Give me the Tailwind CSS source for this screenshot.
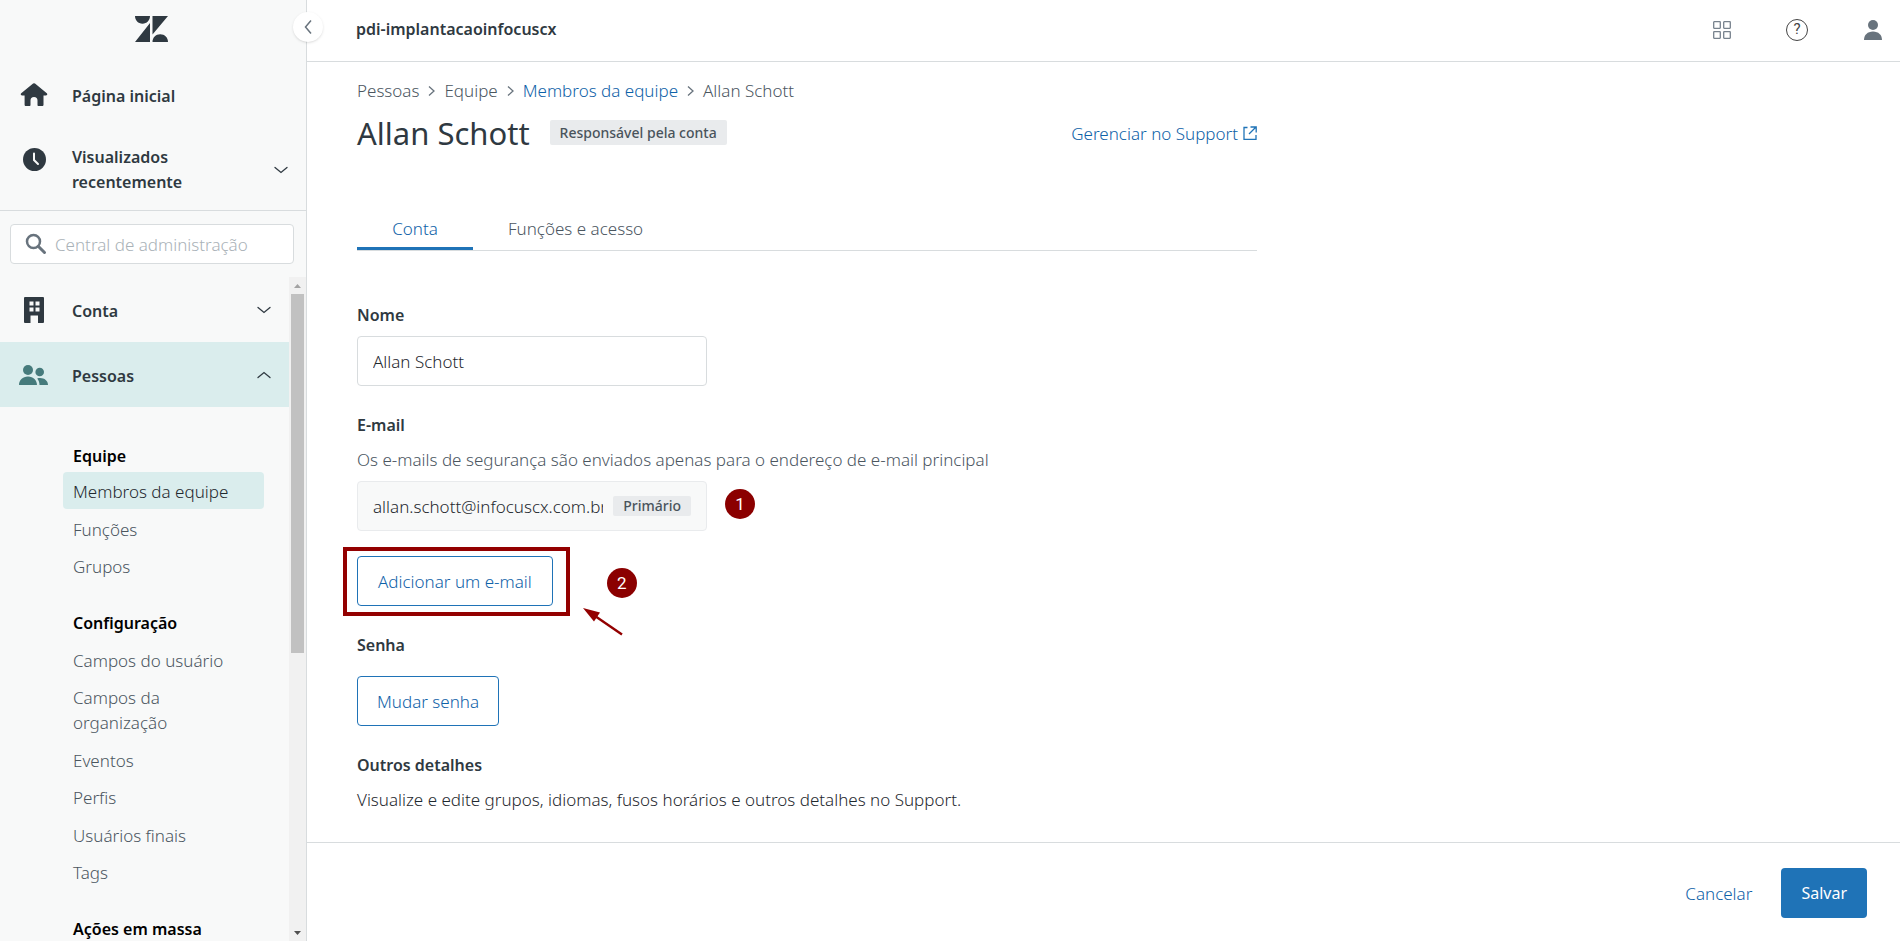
<!DOCTYPE html>
<html lang="pt-BR">
<head>
  <meta charset="UTF-8">
  <meta name="viewport" content="width=device-width, initial-scale=1.0">
  <title>Allan Schott - Central de administração</title>
  <script src="https://cdn.jsdelivr.net/npm/@tailwindcss/browser@4"></script>
</head>
<body class="flex h-screen overflow-hidden bg-white font-['Noto_Sans',sans-serif] text-[17px] leading-[25px] font-light text-[#2f3941]">

  <!-- Sidebar -->
  <aside class="relative flex w-[307px] shrink-0 flex-col border-r border-[#d8dcde] bg-[#f8f9f9]">
    <button aria-label="Recolher menu" class="absolute top-3 -right-[17px] z-10 flex size-[30px] items-center justify-center rounded-full bg-white shadow">
      <svg class="h-4 w-2" viewBox="0 0 8 16" fill="none" stroke="#68737d" stroke-width="1.500"><path d="M7 1.500L1.500 8 7 14.500"/></svg>
    </button>

    <div class="flex h-[62px] shrink-0 justify-center pt-4 pr-1">
      <svg class="h-[26px] w-[33px]" viewBox="0 0 33 26" fill="#2f3941"><path d="M0 0h15c0 4.400-3.200 7.700-7.500 7.700S0 4.400 0 0zM15 7v19H0zM17.500 0H33L17.500 18.500zM17.500 26c0-4.400 3.200-7.700 7.700-7.700S33 21.600 33 26z"/></svg>
    </div>

    <nav class="shrink-0 border-b border-[#d8dcde] pb-[15px]">
      <a href="#" class="flex h-[66px] items-center text-[16px] font-semibold">
        <span class="flex w-[72px] pl-5">
          <svg class="h-6 w-7" viewBox="0 0 28 24" fill="#2f3941"><path d="M13.100.6a1.500 1.500 0 011.900 0l11.800 9.600c.9.800.4 2.200-.8 2.200h-2.500v9.300c0 .8-.5 1.300-1.300 1.300h-3.700c-.6 0-1-.4-1-1v-4.500a3.500 3.500 0 00-7 0V22c0 .6-.4 1-1 1H5.900c-.8 0-1.300-.5-1.300-1.300v-9.300H2c-1.200 0-1.700-1.400-.8-2.200z"/></svg>
        </span>
        <span class="pt-[2px]">Página inicial</span>
      </a>
      <button class="flex w-full items-center pt-[17px] text-left text-[16px] font-semibold">
        <span class="flex w-[72px] shrink-0 self-start pt-[3px] pl-[23px]">
          <svg class="size-[23px]" viewBox="0 0 23 23"><circle cx="11.500" cy="11.500" r="11.500" fill="#2f3941"/><path d="M11 5.500v6.500l4 4" fill="none" stroke="#f8f9f9" stroke-width="2" stroke-linecap="round"/></svg>
        </span>
        <span class="w-[130px]">Visualizados recentemente</span>
        <svg class="mr-[18px] ml-auto h-2 w-[14px]" viewBox="0 0 14 8" fill="none" stroke="#2f3941" stroke-width="1.300" stroke-linecap="round"><path d="M1 1.500l6 5 6-5"/></svg>
      </button>
    </nav>

    <div class="shrink-0 pt-[13px] pr-3 pb-[13px] pl-[10px]">
      <label class="flex h-10 items-center rounded border border-[#d8dcde] bg-white pl-[14px]">
        <svg class="size-[22px] shrink-0" viewBox="0 0 22 22" fill="none" stroke="#68737d"><circle cx="8.500" cy="8.500" r="6.500" stroke-width="2.500"/><path d="M13.500 13.500l6 6" stroke-width="3" stroke-linecap="round"/></svg>
        <input type="search" aria-label="Pesquisar" placeholder="Central de administração" class="ml-2 w-full min-w-0 outline-none placeholder:text-[#aab2b8]">
      </label>
    </div>

    <div class="flex min-h-0 flex-1">
      <nav class="flex-1 overflow-hidden">
        <button class="flex h-[65px] w-full items-center text-left text-[16px] font-semibold">
          <span class="flex w-[72px] pl-6">
            <svg class="h-[26px] w-5" viewBox="0 0 20 26" fill="#2f3941" fill-rule="evenodd"><path d="M1 0h18a1 1 0 011 1v24a1 1 0 01-1 1h-5v-7.500H6.500V26H1a1 1 0 01-1-1V1a1 1 0 011-1zm4.500 4.500v4h4v-4zm6 0v4h4v-4zm-6 6v4h4v-4zm6 0v4h4v-4z"/></svg>
          </span>
          <span class="pt-[3px]">Conta</span>
          <svg class="mr-[18px] ml-auto h-2 w-[14px]" viewBox="0 0 14 8" fill="none" stroke="#2f3941" stroke-width="1.300" stroke-linecap="round"><path d="M1 1.500l6 5 6-5"/></svg>
        </button>
        <button class="flex h-[65px] w-full items-center bg-[#daeded] text-left text-[16px] font-semibold">
          <span class="flex w-[72px] pl-[19px]">
            <svg class="h-5 w-[29px]" viewBox="0 0 29 20" fill="#467b7c"><circle cx="9" cy="5" r="5"/><circle cx="20.700" cy="7" r="4.300"/><path d="M0 20c0-4.800 3.600-8.500 9-8.500s9 3.700 9 8.500zM18.200 13.400c5.700-1.500 10.800 1.500 10.800 6.600h-8.500c0-2.600-.8-4.800-2.300-6.600z"/></svg>
          </span>
          <span class="pt-[3px]">Pessoas</span>
          <svg class="mr-[18px] ml-auto h-2 w-[14px]" viewBox="0 0 14 8" fill="none" stroke="#2f3941" stroke-width="1.300" stroke-linecap="round"><path d="M1 6.500l6-5 6 5"/></svg>
        </button>

        <div class="mt-8 mr-[25px] ml-[63px] space-y-[22px] text-[#4b565f]">
          <section>
            <h2 class="px-[10px] pt-[5px] pb-[3px] text-[16px] font-semibold text-black">Equipe</h2>
            <ul>
              <li><a href="#" class="block rounded bg-[#daeded] px-[10px] pt-[7px] pb-[5px] text-[#1f292f]">Membros da equipe</a></li>
              <li><a href="#" class="block px-[10px] pt-2 pb-[5px]">Funções</a></li>
              <li><a href="#" class="block px-[10px] pt-[7px] pb-[5px]">Grupos</a></li>
            </ul>
          </section>
          <section>
            <h2 class="px-[10px] pt-[5px] pb-[5px] text-[16px] font-semibold text-black">Configuração</h2>
            <ul>
              <li><a href="#" class="block px-[10px] pt-[7px] pb-[5px]">Campos do usuário</a></li>
              <li><a href="#" class="block w-[140px] px-[10px] pt-[7px] pb-[5px]">Campos da organização</a></li>
              <li><a href="#" class="block px-[10px] pt-2 pb-[5px]">Eventos</a></li>
              <li><a href="#" class="block px-[10px] pt-[7px] pb-[5px]">Perfis</a></li>
              <li><a href="#" class="block px-[10px] pt-2 pb-[5px]">Usuários finais</a></li>
              <li><a href="#" class="block px-[10px] pt-[7px] pb-[5px]">Tags</a></li>
            </ul>
          </section>
          <section>
            <h2 class="px-[10px] pt-[5px] pb-[5px] text-[16px] font-semibold text-black">Ações em massa</h2>
          </section>
        </div>
      </nav>

      <!-- Scrollbar -->
      <div class="flex w-[17px] shrink-0 flex-col items-center bg-[#f1f1f1]">
        <svg class="size-[17px] shrink-0" viewBox="0 0 17 17" fill="#a3a3a3"><path d="M5 11h7L8.500 7z"/></svg>
        <div class="min-h-0 w-full flex-1 px-[2px]"><div class="h-[57%] bg-[#c1c1c1]"></div></div>
        <svg class="size-[17px] shrink-0" viewBox="0 0 17 17" fill="#505050"><path d="M5 7h7l-3.500 4z"/></svg>
      </div>
    </div>
  </aside>

  <div class="flex min-w-0 flex-1 flex-col">
    <!-- Top bar -->
    <header class="flex h-[62px] shrink-0 items-center border-b border-[#d8dcde] pr-[18px] pb-[2px] pl-[49px]">
      <span class="text-[16px] font-semibold">pdi-implantacaoinfocuscx</span>
      <div class="ml-auto flex items-center">
        <button aria-label="Produtos">
          <svg class="size-[18px]" viewBox="0 0 18 18" fill="none" stroke="#77828d" stroke-width="1.300"><rect x=".7" y=".7" width="6.600" height="6.600" rx=".5"/><rect x="10.700" y=".7" width="6.600" height="6.600" rx=".5"/><rect x=".7" y="10.700" width="6.600" height="6.600" rx=".5"/><rect x="10.700" y="10.700" width="6.600" height="6.600" rx=".5"/></svg>
        </button>
        <button aria-label="Ajuda" class="ml-[55px] flex size-[22px] items-center justify-center rounded-full border border-[#444] font-['Roboto',sans-serif] text-[15px] font-normal text-[#444]">?</button>
        <button aria-label="Perfil" class="ml-14">
          <svg class="h-5 w-[18px]" viewBox="0 0 18 20" fill="#68737d"><circle cx="9" cy="5" r="5"/><path d="M0 20c0-5 3.500-8.500 9-8.500s9 3.500 9 8.500z"/></svg>
        </button>
      </div>
    </header>

    <main class="min-h-0 flex-1 overflow-hidden pt-4 pr-4 pl-[50px]">
      <div class="max-w-[900px]">
        <nav aria-label="Trilha" class="flex items-center gap-2 text-[#4b565f]">
          <span>Pessoas</span>
          <svg class="h-[10px] w-[9px]" viewBox="0 0 9 10" fill="none" stroke="#68737d" stroke-width="1.300"><path d="M2 .5L7 5 2 9.500"/></svg>
          <span>Equipe</span>
          <svg class="h-[10px] w-[9px]" viewBox="0 0 9 10" fill="none" stroke="#68737d" stroke-width="1.300"><path d="M2 .5L7 5 2 9.500"/></svg>
          <a href="#" class="text-[#0f62a8]">Membros da equipe</a>
          <svg class="h-[10px] w-[9px]" viewBox="0 0 9 10" fill="none" stroke="#68737d" stroke-width="1.300"><path d="M2 .5L7 5 2 9.500"/></svg>
          <span>Allan Schott</span>
        </nav>

        <div class="mt-2 flex h-11 items-center">
          <h1 class="text-[31px] font-normal">Allan Schott</h1>
          <span class="mb-[2px] ml-5 rounded-[2px] bg-[#e9ebed] px-[10px] text-[14px] font-medium text-[#49545c]">Responsável pela conta</span>
          <a href="#" class="ml-auto flex items-center gap-[5px] text-[#0f62a8]">
            Gerenciar no Support
            <svg class="size-[14px]" viewBox="0 0 14 14" fill="none" stroke="#1f73b7" stroke-width="1.300"><path d="M4.500 1.500H1v11.800h12V9M7.500 1h5.700v5.500M13 1L6 8"/></svg>
          </a>
        </div>

        <div role="tablist" class="mt-[61px] flex border-b border-[#d8dcde]">
          <button role="tab" aria-selected="true" class="w-[116px] border-b-[3px] border-[#1f73b7] pb-[6px] text-[#0f62a8]">Conta</button>
          <button role="tab" class="px-[35px] pb-[9px] text-[#4b565f]">Funções e acesso</button>
        </div>

        <form class="text-[#1f292f]">
          <label for="nome" class="mt-[52px] block text-[16px] font-semibold text-[#2f3941]">Nome</label>
          <input id="nome" type="text" value="Allan Schott" class="mt-[8px] block h-[50px] w-[350px] rounded border border-[#d8dcde] px-[15px]">

          <label for="email" class="mt-[27px] block text-[16px] font-semibold text-[#2f3941]">E-mail</label>
          <p class="mt-[9px] text-[#4b565f]">Os e-mails de segurança são enviados apenas para o endereço de e-mail principal</p>
          <div class="mt-[9px] flex items-center gap-[18px]">
            <div class="flex h-[50px] w-[350px] items-center gap-[10px] rounded border border-[#e9ebed] bg-[#f8f9f9] px-[15px]">
              <input id="email" type="email" readonly value="allan.schott@infocuscx.com.br" class="w-[230px] min-w-0 flex-1 outline-none">
              <span class="rounded-[2px] bg-[#e9ebed] px-[10px] text-[14px] leading-5 font-medium text-[#49545c]">Primário</span>
            </div>
            <span class="mb-1 flex size-[30px] items-center justify-center rounded-full bg-[#8b0000] font-['Roboto',sans-serif] text-[17px] font-normal text-white">1</span>
          </div>

          <div class="mt-[25px] flex items-center">
            <div class="relative">
              <button type="button" class="h-[50px] rounded border border-[#1f73b7] px-5 text-[#0f62a8]">Adicionar um e-mail</button>
              <div class="pointer-events-none absolute -top-[9px] -right-[17px] -bottom-[10px] -left-[14px] border-4 border-[#930000]"></div>
            </div>
            <div class="relative ml-[54px] pt-1">
              <span class="flex size-[30px] items-center justify-center rounded-full bg-[#8b0000] font-['Roboto',sans-serif] text-[17px] font-normal text-white">2</span>
              <svg class="absolute top-11 -left-6 h-7 w-10" viewBox="0 0 40 28"><path d="M0 0l17 4.500-6 9z" fill="#930000"/><path d="M12 8l27 18.500" stroke="#930000" stroke-width="2.400"/></svg>
            </div>
          </div>

          <h2 class="mt-[27px] text-[16px] font-semibold text-[#2f3941]">Senha</h2>
          <button type="button" class="mt-[18px] h-[50px] rounded border border-[#1f73b7] px-[19px] text-[#0f62a8]">Mudar senha</button>

          <h2 class="mt-[27px] text-[16px] font-semibold text-[#2f3941]">Outros detalhes</h2>
          <p class="mt-[9px]">Visualize e edite grupos, idiomas, fusos horários e outros detalhes no Support.</p>
        </form>
      </div>
    </main>

    <footer class="flex h-[99px] shrink-0 items-center justify-end gap-[29px] border-t border-[#d8dcde] pt-[2px] pr-[33px]">
      <button class="text-[#0f62a8]">Cancelar</button>
      <button class="h-[50px] rounded bg-[#1f73b7] px-5 text-[16px] font-normal text-white">Salvar</button>
    </footer>
  </div>
</body>
</html>
